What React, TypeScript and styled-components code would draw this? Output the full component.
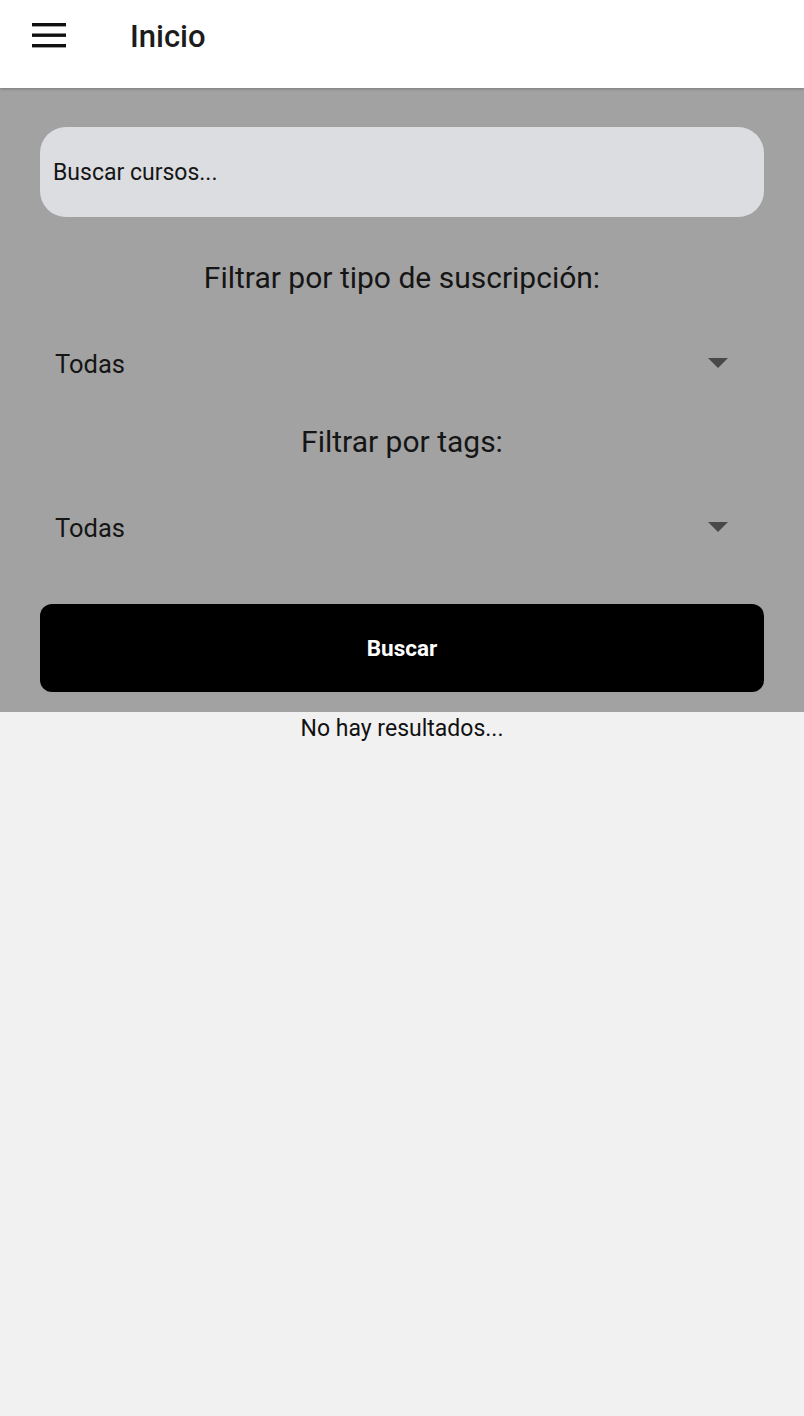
import * as React from 'react';
import styled, { createGlobalStyle } from 'styled-components';

const GlobalStyle = createGlobalStyle`
  html, body {
    margin: 0;
    padding: 0;
    background: #f1f1f1;
    font-family: Roboto, "Noto Sans", sans-serif;
  }
`

const Page = styled.div`
  min-height: 1416px;
  background: #f1f1f1;
  display: flex;
  flex-direction: column;
`

const Header = styled.header`
  height: 88px;
  box-sizing: border-box;
  padding-top: 18px;
  background: #ffffff;
  display: flex;
  align-items: flex-start;
  box-shadow: 0 1px 3px rgba(0, 0, 0, 0.25);
  position: relative;
  z-index: 1;
`

const MenuButton = styled.div`
  width: 34px;
  height: 26px;
  margin-left: 32px;
  margin-top: 5px;
  display: flex;
`

const Title = styled.h1`
  margin: 0 0 0 64px;
  font-size: 31px;
  line-height: 38px;
  font-weight: 500;
  color: #1c1c1c;
`

const FilterPanel = styled.section`
  background: #a2a2a2;
  padding: 39px 40px 20px;
  display: flex;
  flex-direction: column;
`

const SearchInput = styled.div`
  height: 90px;
  border-radius: 26px;
  background: #dcdde1;
  display: flex;
  align-items: center;
  padding-left: 13px;
  font-size: 23px;
  color: #151515;
`

const FilterLabel = styled.div<{ top: number }>`
  margin-top: ${(props) => props.top}px;
  line-height: 40px;
  text-align: center;
  font-size: 30px;
  color: #151515;
`

const Select = styled.div`
  height: 80px;
  margin-top: 26px;
  display: flex;
  align-items: center;
  justify-content: space-between;
  padding: 0 36px 0 15px;
  font-size: 25.5px;
  color: #151515;
`

const Arrow = styled.span`
  width: 0;
  height: 0;
  border-left: 10px solid transparent;
  border-right: 10px solid transparent;
  border-top: 10px solid #494949;
  margin-top: -2px;
`

const SearchButton = styled.button`
  margin-top: 36px;
  height: 88px;
  border: none;
  border-radius: 12px;
  background: #000000;
  color: #ffffff;
  font-family: Roboto, "Noto Sans", sans-serif;
  font-size: 22.5px;
  font-weight: 700;
`

const EmptyText = styled.div`
  margin-top: 3px;
  line-height: 28px;
  text-align: center;
  font-size: 23px;
  color: #111111;
`

export default function App() {
  return (
    <Page>
      <GlobalStyle />
      <Header>
        <MenuButton>
          <svg width="34" height="26" viewBox="0 0 34 26">
            <rect x="0" y="0" width="34" height="3.4" fill="#111" />
            <rect x="0" y="10.5" width="34" height="3.4" fill="#111" />
            <rect x="0" y="21" width="34" height="3.4" fill="#111" />
          </svg>
        </MenuButton>
        <Title>Inicio</Title>
      </Header>
      <FilterPanel>
        <SearchInput>Buscar cursos...</SearchInput>
        <FilterLabel top={41}>Filtrar por tipo de suscripción:</FilterLabel>
        <Select>
          <span>Todas</span>
          <Arrow />
        </Select>
        <FilterLabel top={18}>Filtrar por tags:</FilterLabel>
        <Select>
          <span>Todas</span>
          <Arrow />
        </Select>
        <SearchButton>Buscar</SearchButton>
      </FilterPanel>
      <EmptyText>No hay resultados...</EmptyText>
    </Page>
  );
}
